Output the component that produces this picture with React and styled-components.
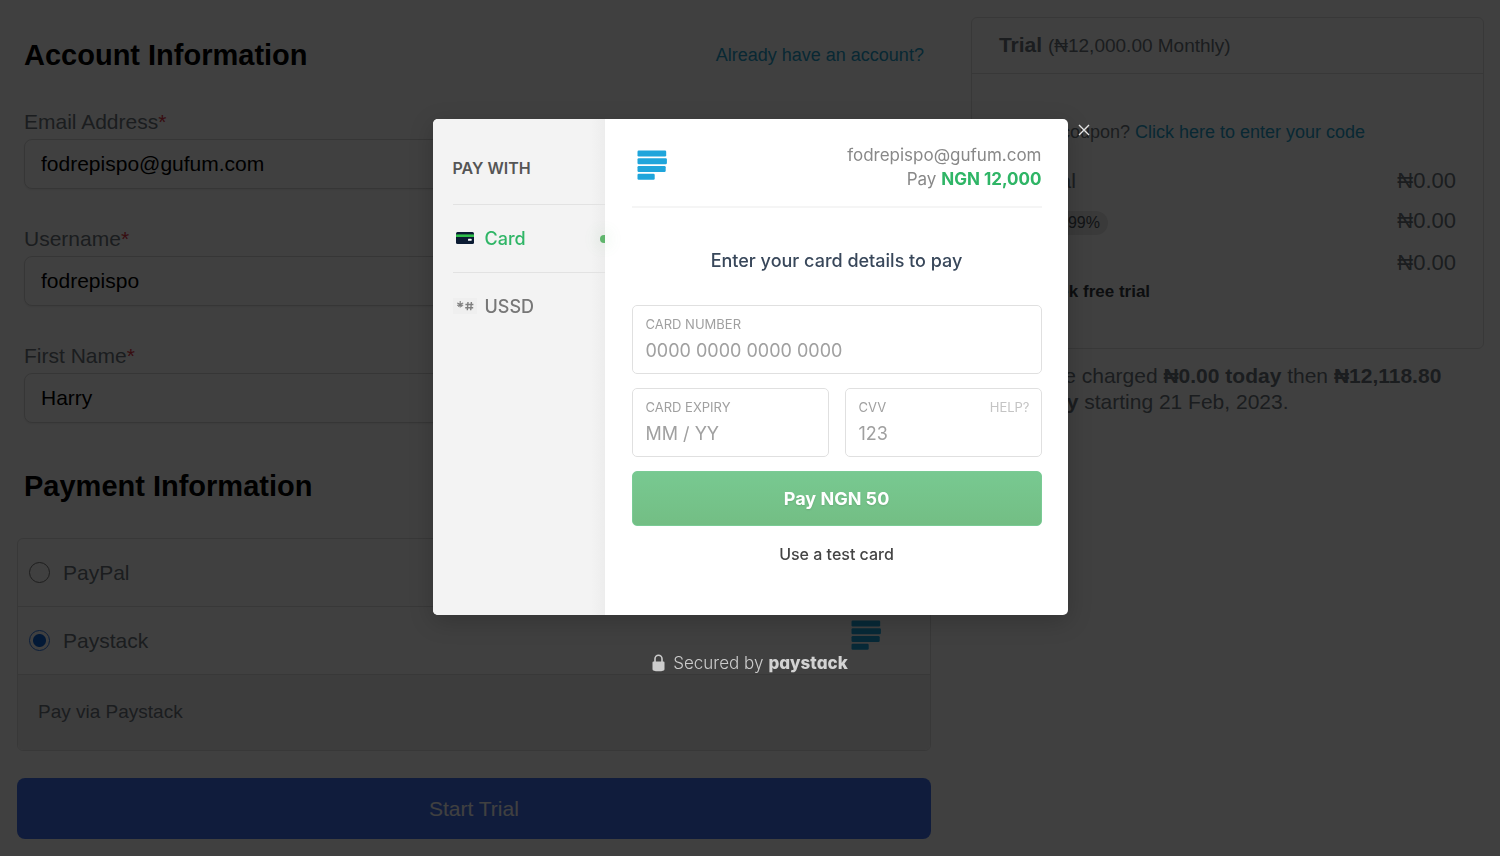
import { useState } from "react";
import styled, { createGlobalStyle } from "styled-components";

const GlobalStyle = createGlobalStyle`
  *, *::before, *::after {
    box-sizing: border-box;
  }

  body {
    margin: 0;
    background: #fff;
    color: #6c757d;
    font-family: "Liberation Sans", Arial, sans-serif;
    font-size: 21px;
    line-height: 26px;
  }

  h2, h3, p, ul {
    margin: 0;
    padding: 0;
  }

  input, button {
    font: inherit;
  }
`;

/* checkout page */

const Page = styled.main`
  display: grid;
  grid-template-columns: minmax(0, 57fr) minmax(0, 32fr);
  align-items: start;
  gap: 40px;
  padding: 17px 16px 16px 17px;
`;

const Section = styled.section`
  padding: ${(props) => (props.$first ? "20px 7px 45px" : "0 7px 34px")};
`;

const SectionHead = styled.div`
  display: flex;
  align-items: center;
  justify-content: space-between;
`;

const SectionTitle = styled.h2`
  color: #000;
  font-size: 29px;
  line-height: 36px;
`;

const TextLink = styled.a`
  color: #24a0cc;
  text-decoration: none;
`;

const LoginPrompt = styled.p`
  font-size: 18px;
  line-height: 24px;
`;

const Fields = styled.div`
  display: grid;
  gap: 38px;
  padding-top: 37px;
`;

const Field = styled.div`
  display: grid;
  gap: 5px;

  label {
    line-height: 24px;
  }

  label span {
    color: #dc3545;
  }

  input {
    width: 100%;
    height: 50px;
    padding: 0 16px;
    color: #000;
    background: #fff;
    border: 1px solid #d8d8d8;
    border-radius: 8px;
    box-shadow: 0 1px 2px rgba(0, 0, 0, 0.08);
  }
`;

const Gateways = styled.div`
  border: 1px solid #e0e0e0;
  border-radius: 6px;
  overflow: hidden;
`;

const Gateway = styled.label`
  display: flex;
  align-items: center;
  gap: 13px;
  height: 68px;
  padding: 0 49px 0 11px;
  border-bottom: 1px solid #e0e0e0;

  svg {
    align-self: flex-start;
    margin: 13px 0 0 auto;
  }
`;

const Radio = styled.input`
  appearance: none;
  flex: none;
  width: 21px;
  height: 21px;
  margin: 0;
  border: 1px solid #767676;
  border-radius: 50%;

  &:checked {
    border-color: #2f78e6;
    background: radial-gradient(circle, #0f66d8 6px, #fff 7px);
  }
`;

const GatewayNote = styled.p`
  padding: 24px 20px 25px;
  color: #6c757d;
  background: #f4f4f4;
  font-size: 19px;
`;

const StartButton = styled.button`
  display: block;
  width: 100%;
  height: 61px;
  margin-top: 27px;
  color: #fff;
  background: #4272ee;
  border: 0;
  border-radius: 8px;
`;

const Summary = styled.section`
  border: 1px solid #e0e0e0;
  border-radius: 6px;
`;

const SummaryHead = styled.h3`
  padding: 14px 27px;
  border-bottom: 1px solid #e0e0e0;
  font-size: 21px;

  span {
    font-size: 19px;
    font-weight: 400;
  }
`;

const SummaryBody = styled.div`
  display: grid;
  padding: 46px 27px;
`;

const Coupon = styled.p`
  margin-bottom: 24px;
  font-size: 18px;
  line-height: 24px;
`;

const SummaryRow = styled.div`
  display: flex;
  align-items: center;
  justify-content: space-between;
  height: 26px;
  margin-bottom: ${(props) => props.$space};
`;

const Amount = styled.span`
  font-size: 22px;
`;

const Rate = styled.span`
  display: inline-block;
  margin-left: 15px;
  padding: 0 8px;
  color: #495057;
  background: #e6e6e6;
  border-radius: 12px;
  font-size: 16px;
  line-height: 24px;
`;

const TrialNote = styled.p`
  color: #343a40;
  font-size: 17px;
  font-weight: 700;
  line-height: 20px;
`;

const ChargeNote = styled.p`
  padding: 14px 27px 0;
`;

/* payment modal */

const Overlay = styled.div`
  position: fixed;
  inset: 0;
  display: flex;
  flex-direction: column;
  align-items: center;
  justify-content: center;
  background: rgba(0, 0, 0, 0.75);
  font-family: Inter, "Liberation Sans", sans-serif;
  font-size: 16px;
  line-height: 24px;
`;

const Modal = styled.div`
  position: relative;
  display: flex;
  width: 635px;
  max-width: 100%;
  background: #fff;
  border-radius: 5px;
  box-shadow: 0 6px 24px rgba(0, 0, 0, 0.2);
`;

const CloseButton = styled.button`
  position: absolute;
  top: 2px;
  left: 100%;
  display: grid;
  place-items: center;
  width: 32px;
  height: 18px;
  padding: 0;
  background: none;
  border: 0;
`;

const Sidebar = styled.nav`
  flex: none;
  width: 172px;
  padding: 37px 0 0 20px;
  background: linear-gradient(to left, #ededed, #f3f3f3 14px);
  border-radius: 5px 0 0 5px;
`;

const SidebarTitle = styled.h3`
  padding-bottom: 24px;
  color: #555;
  font-size: 16px;
  font-weight: 600;
`;

const Channel = styled.button`
  display: flex;
  align-items: center;
  width: 100%;
  height: 68px;
  padding: 0;
  color: ${(props) => (props.$active ? "#2fb566" : "#777")};
  background: none;
  border: 0;
  border-top: 1px solid #e2e2e2;
  font-size: 18px;
  font-weight: 500;

  svg {
    flex: none;
    margin: 0 8px 2px 0;
  }
`;

const ActiveDot = styled.span`
  width: 5px;
  height: 8px;
  margin-left: auto;
  background: #5fb56c;
  border-radius: 4px 0 0 4px;
  box-shadow: 0 0 16px 2px rgba(95, 181, 108, 0.2);
`;

const Main = styled.div`
  flex: 1;
  min-width: 0;
  padding: 24px 26px 49px 27px;
`;

const MainHead = styled.div`
  display: flex;
  justify-content: space-between;
  align-items: flex-start;
  padding: 0 0 15px 5px;
  border-bottom: 2px solid #f5f5f5;

  svg {
    margin-top: 7px;
  }
`;

const Customer = styled.p`
  color: #888;
  font-size: 17px;
  text-align: right;

  strong {
    color: #2fb566;
    font-weight: 700;
  }
`;

const Prompt = styled.h3`
  padding: 41px 0 32px;
  color: #38475a;
  font-size: 18px;
  font-weight: 500;
  text-align: center;
`;

const CardForm = styled.form`
  display: grid;
  grid-template-columns: 1fr 1fr;
  gap: 14px 16px;
`;

const CardField = styled.div`
  grid-column: ${(props) => (props.$wide ? "1 / -1" : "auto")};
  height: 69px;
  padding: 9px 11px 0 13px;
  border: 1px solid #e0e0e0;
  border-radius: 5px;

  input {
    display: block;
    width: 100%;
    height: 26px;
    margin-top: 4px;
    padding: 0;
    border: 0;
    outline: 0;
    font-size: 18px;
  }

  input::placeholder {
    color: #a0a0a0;
    opacity: 1;
  }
`;

const CardFieldHead = styled.div`
  display: flex;
  justify-content: space-between;
  color: #a0a0a0;
  font-size: 13px;
  line-height: 18px;
`;

const HelpButton = styled.button`
  padding: 0;
  color: #c4c4c4;
  background: none;
  border: 0;
`;

const PayButton = styled.button`
  grid-column: 1 / -1;
  height: 55px;
  color: #fff;
  background: linear-gradient(#78c991, #73be84);
  border: 1px solid #7acb95;
  border-radius: 5px;
  font-size: 18px;
  font-weight: 700;
  text-shadow: 0 1px 2px rgba(0, 0, 0, 0.12);
`;

const TestCardButton = styled.button`
  display: block;
  margin: 16px auto 0;
  padding: 0;
  color: #444;
  background: none;
  border: 0;
  font-weight: 500;
`;

const Secured = styled.p`
  display: flex;
  align-items: center;
  margin: 36px 0 62px;
  color: #ccc;
  font-size: 17px;
  font-weight: 300;

  svg {
    margin-right: 8px;
  }

  strong {
    margin-left: 5px;
    color: #d2d2d2;
    font-weight: 800;
    font-feature-settings: "cv11";
  }
`;

const PaystackMark = () => (
  <svg width="30" height="30" viewBox="0 0 30 30" fill="#1fa5db" aria-hidden="true">
    <rect x="0.5" y="0.5" width="28.7" height="6" rx="1.2" />
    <rect x="0.5" y="8.2" width="29.4" height="6" rx="1.2" />
    <rect x="0.5" y="16" width="28.2" height="6" rx="1.2" />
    <rect x="0.5" y="23.8" width="17.2" height="6" rx="1.2" />
  </svg>
);

const CardIcon = () => (
  <svg width="24" height="16" viewBox="0 0 24 16" aria-hidden="true">
    <rect x="3" y="2" width="18" height="12" rx="1.5" fill="#0b1b33" />
    <rect x="3" y="4.4" width="18" height="2.6" fill="#2fbf4a" />
    <rect x="15" y="8.8" width="3.6" height="2" rx="0.4" fill="#fff" />
  </svg>
);

const UssdIcon = () => (
  <svg width="24" height="16" viewBox="0 0 24 16" fill="none" stroke="#808080" aria-hidden="true">
    <rect width="24" height="16" fill="#efefef" stroke="none" />
    <path d="M7.2 3v6.4M4.2 5l6 2.4M10.2 5l-6 2.4M5.4 8.8l1.8-2.6M9 8.8L7.2 6.2" strokeWidth="1.1" />
    <path d="M15 4l-.7 8.2M18.4 4l-.7 8.2M12.4 6.5h8M12.2 9.7h8" strokeWidth="1.4" />
  </svg>
);

const LockIcon = () => (
  <svg width="13" height="18" viewBox="0 0 13 18" aria-hidden="true">
    <path d="M3 8V4.8a3.5 3.5 0 0 1 7 0V8" fill="none" stroke="#ccc" strokeWidth="1.6" />
    <path d="M1.6 7.5h9.8q1.1 0 1.1 1.1v6.6q0 2-6 2t-6-2V8.6q0-1.1 1.1-1.1z" fill="#ccc" />
  </svg>
);

const CloseIcon = () => (
  <svg width="12" height="12" viewBox="0 0 12 12" stroke="#e4e4e4" strokeWidth="1.4" aria-hidden="true">
    <path d="M1 1l10 10M11 1L1 11" />
  </svg>
);

const accountFields = [
  { id: "email", label: "Email Address", value: "fodrepispo@gufum.com" },
  { id: "username", label: "Username", value: "fodrepispo" },
  { id: "first_name", label: "First Name", value: "Harry" },
];

const App = () => {
  const [gateway, setGateway] = useState("paystack");
  const [channel, setChannel] = useState("card");
  const [open, setOpen] = useState(true);

  return (
    <>
      <GlobalStyle />
      <Page>
        <div>
          <Section $first>
            <SectionHead>
              <SectionTitle>Account Information</SectionTitle>
              <LoginPrompt>
                <TextLink href="#login">Already have an account?</TextLink>
              </LoginPrompt>
            </SectionHead>
            <Fields>
              {accountFields.map((field) => (
                <Field key={field.id}>
                  <label htmlFor={field.id}>
                    {field.label}
                    <span>*</span>
                  </label>
                  <input id={field.id} type="text" defaultValue={field.value} />
                </Field>
              ))}
            </Fields>
          </Section>
          <Section>
            <SectionTitle>Payment Information</SectionTitle>
          </Section>
          <Gateways>
            <Gateway>
              <Radio
                type="radio"
                name="gateway"
                checked={gateway === "paypal"}
                onChange={() => setGateway("paypal")}
              />
              PayPal
            </Gateway>
            <Gateway>
              <Radio
                type="radio"
                name="gateway"
                checked={gateway === "paystack"}
                onChange={() => setGateway("paystack")}
              />
              Paystack
              <PaystackMark />
            </Gateway>
            <GatewayNote>Pay via Paystack</GatewayNote>
          </Gateways>
          <StartButton type="button" onClick={() => setOpen(true)}>
            Start Trial
          </StartButton>
        </div>

        <aside>
          <Summary>
            <SummaryHead>
              Trial <span>(₦12,000.00 Monthly)</span>
            </SummaryHead>
            <SummaryBody>
              <Coupon>
                Have a coupon? <TextLink href="#coupon">Click here to enter your code</TextLink>
              </Coupon>
              <SummaryRow $space="14px">
                <span>Subtotal</span>
                <Amount>₦0.00</Amount>
              </SummaryRow>
              <SummaryRow $space="16px">
                <span>
                  Tax
                  <Rate>0.99%</Rate>
                </span>
                <Amount>₦0.00</Amount>
              </SummaryRow>
              <SummaryRow $space="6px">
                <span>Total</span>
                <Amount>₦0.00</Amount>
              </SummaryRow>
              <TrialNote>One week free trial</TrialNote>
            </SummaryBody>
          </Summary>
          <ChargeNote>
            You'll be charged <strong>₦0.00 today</strong> then <strong>₦12,118.80</strong>
            <br />
            <strong>Monthly</strong> starting 21 Feb, 2023.
          </ChargeNote>
        </aside>
      </Page>

      {open && (
        <Overlay>
          <Modal role="dialog" aria-label="Pay with Paystack">
            <Sidebar>
              <SidebarTitle>PAY WITH</SidebarTitle>
              <Channel
                type="button"
                $active={channel === "card"}
                onClick={() => setChannel("card")}
              >
                <CardIcon />
                Card
                {channel === "card" && <ActiveDot />}
              </Channel>
              <Channel
                type="button"
                $active={channel === "ussd"}
                onClick={() => setChannel("ussd")}
              >
                <UssdIcon />
                USSD
                {channel === "ussd" && <ActiveDot />}
              </Channel>
            </Sidebar>
            <Main>
              <MainHead>
                <PaystackMark />
                <Customer>
                  fodrepispo@gufum.com
                  <br />
                  Pay <strong>NGN 12,000</strong>
                </Customer>
              </MainHead>
              <Prompt>Enter your card details to pay</Prompt>
              <CardForm onSubmit={(e) => e.preventDefault()}>
                <CardField $wide>
                  <CardFieldHead>
                    <label htmlFor="card_number">CARD NUMBER</label>
                  </CardFieldHead>
                  <input id="card_number" type="text" placeholder="0000 0000 0000 0000" />
                </CardField>
                <CardField>
                  <CardFieldHead>
                    <label htmlFor="card_expiry">CARD EXPIRY</label>
                  </CardFieldHead>
                  <input id="card_expiry" type="text" placeholder="MM / YY" />
                </CardField>
                <CardField>
                  <CardFieldHead>
                    <label htmlFor="card_cvv">CVV</label>
                    <HelpButton type="button">HELP?</HelpButton>
                  </CardFieldHead>
                  <input id="card_cvv" type="text" placeholder="123" />
                </CardField>
                <PayButton type="submit">Pay NGN 50</PayButton>
              </CardForm>
              <TestCardButton type="button">Use a test card</TestCardButton>
            </Main>
            <CloseButton type="button" aria-label="Close" onClick={() => setOpen(false)}>
              <CloseIcon />
            </CloseButton>
          </Modal>
          <Secured>
            <LockIcon />
            Secured by <strong>paystack</strong>
          </Secured>
        </Overlay>
      )}
    </>
  );
};

export default App;
